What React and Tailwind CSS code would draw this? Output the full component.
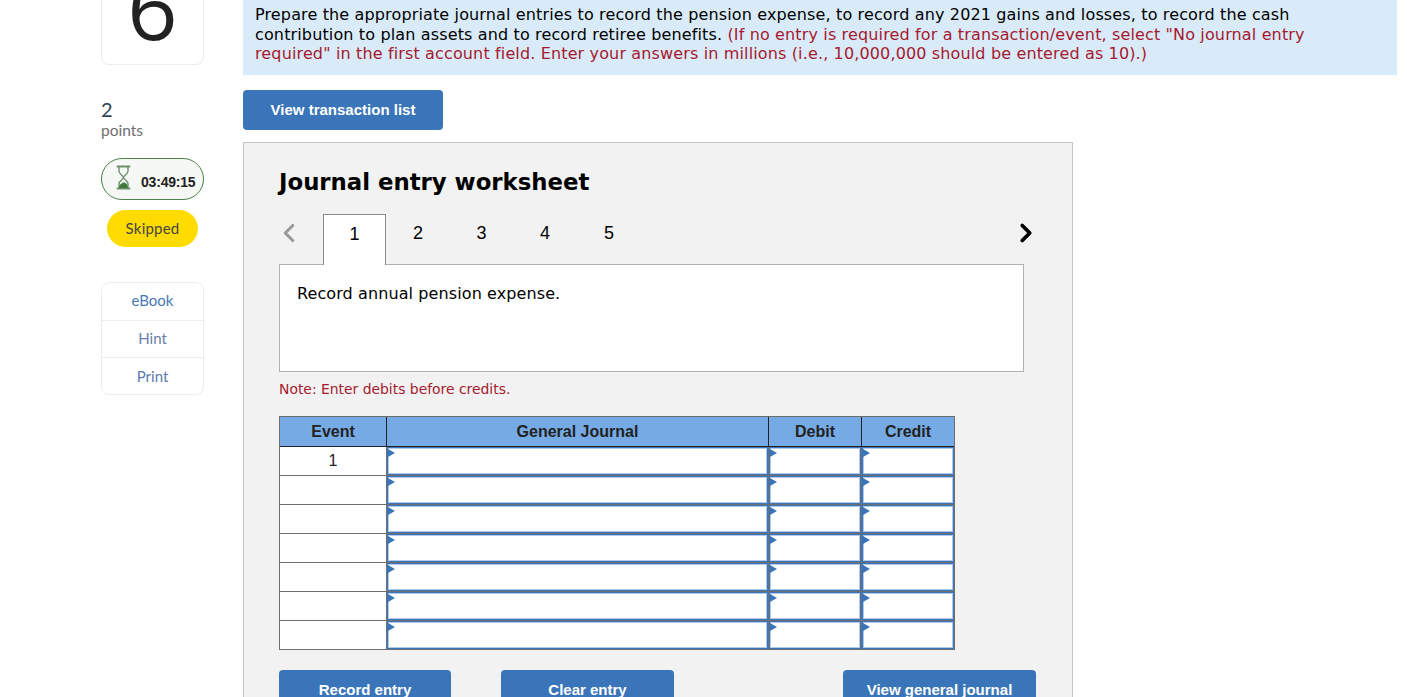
import React from "react";
import { ChevronLeft, ChevronRight } from "lucide-react";

const rows = [1, 2, 3, 4, 5, 6, 7];

// small blue triangle in the corner of each answer cell
function InputCell() {
    return (
        <div className="relative border border-[#3a75b9] bg-white">
            <div className="h-full border border-[#b3cbea]"></div>
            <span className="absolute left-0 top-[1px] w-0 h-0 border-y-[4px] border-y-transparent border-l-[7px] border-l-[#3a75b9]"></span>
        </div>
    );
}

function SideLink({ label, className }) {
    return (
        <div className={`flex items-center justify-center text-[15px] ${className}`}>{label}</div>
    );
}

export default function App() {
    return (
        <div className="h-[697px] overflow-hidden bg-white flex font-['Liberation_Sans',sans-serif]">
            {/* Left column */}
            <div className="w-[103px] ml-[101px] shrink-0 flex flex-col font-['Lato',sans-serif]">
                <div className="h-[65px] border border-t-0 border-[#ececec] rounded-b-lg overflow-hidden flex justify-center items-end">
                    <span className="text-[#222] text-[88px] leading-none font-medium font-['Open_Sans',sans-serif] mb-[14px]">6</span>
                </div>
                <div className="mt-[34px] text-[20px] leading-[20px] text-[#333f55]">2</div>
                <div className="mt-[1px] text-[15.5px] leading-[20px] text-[#6f6f6f]">points</div>
                <div className="mt-[18px] h-[42px] border border-[#4c8148] rounded-[21px] bg-[#f5f8f5] flex items-center pl-[13px]">
                    <svg width="17" height="25" viewBox="0 0 17 25" className="-mt-[3px]">
                        <path d="M2.500 1.500h12M2.500 23.500h12" stroke="#6f8f6c" strokeWidth="2" strokeLinecap="round" />
                        <path d="M4 2v4c0 3.500 4.500 4.500 4.500 6.500s-4.500 3-4.500 6.500v4M13 2v4c0 3.500-4.500 4.500-4.500 6.500s4.500 3 4.500 6.500v4" fill="none" stroke="#6f8f6c" strokeWidth="1.400" />
                        <path d="M4 23c0-3 2.500-5 4.500-5.500s4.500 2.500 4.500 5.500z" fill="#3f7a3c" />
                    </svg>
                    <span className="ml-[9px] mt-[6px] text-[14px] font-bold text-[#222] font-['Liberation_Sans',sans-serif] tracking-[-0.2px]">03:49:15</span>
                </div>
                <div className="mt-[10px] mx-[6px] h-[37px] rounded-[19px] bg-[#ffdb00] flex items-center justify-center text-[15px] tracking-[0.2px] text-[#444]">Skipped</div>
                <div className="mt-[35px] h-[113px] border border-[#ececec] rounded-lg flex flex-col">
                    <SideLink label="eBook" className="h-[38px] pb-[2px] border-b border-[#ececec] text-[#4a78b5]" />
                    <SideLink label="Hint" className="h-[37px] pb-[2px] border-b border-[#ececec] text-[#6a7fa8]" />
                    <SideLink label="Print" className="flex-1 pt-[1px] text-[#5a7ab0]" />
                </div>
            </div>

            {/* Main column */}
            <div className="ml-[39px] w-[1154px] shrink-0">
                <div className="h-[75px] bg-[#d9ebf9] pl-3 pr-[40px] pt-[5px] text-[16px] leading-[19.5px] tracking-[0.14px] text-black font-['DejaVu_Sans',sans-serif]">
                    Prepare the appropriate journal entries to record the pension expense, to record any 2021 gains and losses, to record the cash contribution to plan assets and to record retiree benefits. <span className="text-[#a6192e]">(If no entry is required for a transaction/event, select "No journal entry required" in the first account field. Enter your answers in millions (i.e., 10,000,000 should be entered as 10).)</span>
                </div>
                <button className="mt-[15px] w-[200px] h-[40px] rounded bg-[#3a75b9] text-white text-[15px] font-bold">View transaction list</button>

                {/* Worksheet */}
                <div className="mt-[12px] w-[830px] h-[560px] border border-[#c4c4c4] bg-[#f2f2f2] pl-[35px] pt-[24px]">
                    <h2 className="text-[22.8px] leading-[30px] font-bold text-black font-['DejaVu_Sans',sans-serif]">Journal entry worksheet</h2>

                    <div className="mt-[17px] w-[745px] h-[51px] flex items-start relative z-10">
                        <ChevronLeft className="w-[30px] h-[30px] mt-[4px] -ml-[5px] text-[#9a9a9a]" strokeWidth={2.5} />
                        <div className="ml-[19px] w-[63px] h-[51px] bg-white border border-b-0 border-[#8a8a8a] flex justify-center text-[18px] leading-[38px] text-black">1</div>
                        <div className="w-[64px] h-[38px] flex items-center justify-center text-[18px] text-black">2</div>
                        <div className="w-[63px] h-[38px] flex items-center justify-center text-[18px] text-black">3</div>
                        <div className="w-[64px] h-[38px] flex items-center justify-center text-[18px] text-black">4</div>
                        <div className="w-[64px] h-[38px] flex items-center justify-center text-[18px] text-black">5</div>
                        <ChevronRight className="ml-auto w-[30px] h-[30px] mt-[4px] -mr-[17px] text-black" strokeWidth={3} />
                    </div>

                    <div className="w-[745px] h-[108px] -mt-[1px] bg-white border border-[#b0b0b0] px-[17px] pt-[19px] text-[16px] leading-[19px] tracking-[0.1px] text-black font-['DejaVu_Sans',sans-serif]">
                        Record annual pension expense.
                    </div>
                    <p className="mt-[8px] text-[13.9px] leading-[18px] text-[#a6192e] font-['DejaVu_Sans',sans-serif]">Note: Enter debits before credits.</p>

                    {/* Journal table */}
                    <div className="mt-[18px] w-[676px] border border-b-0 border-[#6f6f6f] bg-[#6f6f6f]">
                        <div className="grid grid-cols-[106px_381px_92px_92px] gap-x-px h-[30px] bg-[#222] border-b border-[#222] text-[16px] font-bold text-[#222]">
                            <div className="flex items-center justify-center bg-[#76aae4]">Event</div>
                            <div className="flex items-center justify-center bg-[#76aae4]">General Journal</div>
                            <div className="flex items-center justify-center bg-[#76aae4]">Debit</div>
                            <div className="flex items-center justify-center bg-[#76aae4]">Credit</div>
                        </div>
                        {rows.map((r) => (
                            <div key={r} className="grid grid-cols-[106px_381px_92px_92px] gap-x-px h-[29px] border-b border-[#6f6f6f]">
                                <div className="flex items-center justify-center bg-white text-[16px] text-[#222]">{r === 1 ? "1" : ""}</div>
                                <InputCell />
                                <InputCell />
                                <InputCell />
                            </div>
                        ))}
                    </div>

                    {/* Action buttons */}
                    <div className="mt-[20px] flex text-white text-[15px] font-bold">
                        <button className="w-[172px] h-[40px] rounded bg-[#3a75b9]">Record entry</button>
                        <button className="ml-[50px] w-[173px] h-[40px] rounded bg-[#3a75b9]">Clear entry</button>
                        <button className="ml-[169px] w-[193px] h-[40px] rounded bg-[#3a75b9]">View general journal</button>
                    </div>
                </div>
            </div>
        </div>
    );
}
